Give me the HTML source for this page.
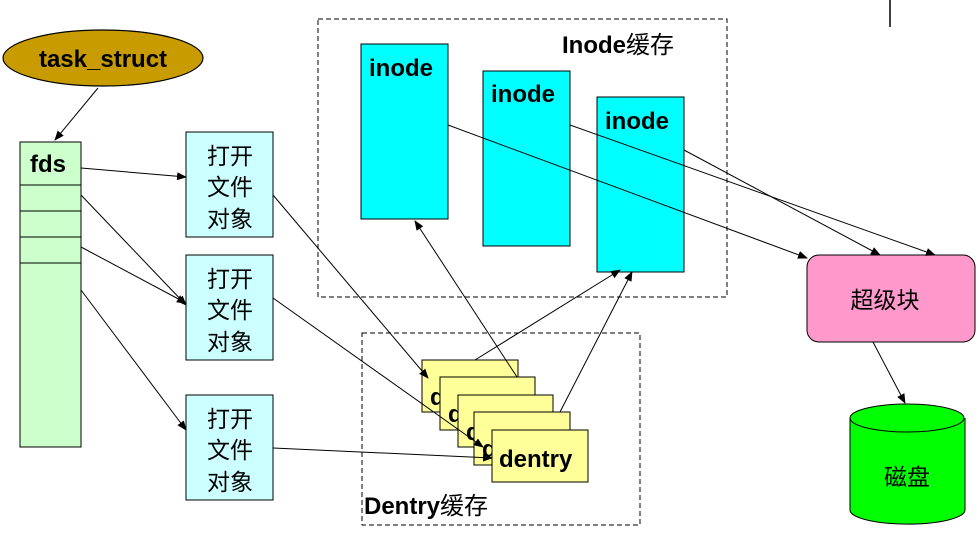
<!DOCTYPE html>
<html><head><meta charset="utf-8"><style>
html,body{margin:0;padding:0;background:#fff;width:979px;height:553px;overflow:hidden}
text{font-family:"Liberation Sans","Noto Sans CJK SC",sans-serif}
.b{font-weight:bold;font-size:24px}
.c{font-size:23px}
</style></head><body>
<svg width="979" height="553" viewBox="0 0 979 553" xmlns="http://www.w3.org/2000/svg">
<defs><marker id="a" markerWidth="10" markerHeight="8" refX="9" refY="4" orient="auto" markerUnits="userSpaceOnUse"><path d="M0,0 L10,4 L0,8 z" fill="#000"/></marker></defs>
<line x1="890" y1="0" x2="890" y2="27" stroke="#000" stroke-width="1.5"/>
<ellipse cx="103" cy="58" rx="100" ry="28" fill="#C89B00" stroke="#000" stroke-width="1.2"/>
<text x="103" y="67" text-anchor="middle" class="b">task_struct</text>
<line x1="98" y1="88" x2="55" y2="140" stroke="#000" marker-end="url(#a)"/>
<rect x="20" y="142" width="61" height="305" fill="#CCFFCC" stroke="#000"/>
<line x1="20" y1="185" x2="81" y2="185" stroke="#000"/>
<line x1="20" y1="211" x2="81" y2="211" stroke="#000"/>
<line x1="20" y1="237" x2="81" y2="237" stroke="#000"/>
<line x1="20" y1="263" x2="81" y2="263" stroke="#000"/>
<text x="30" y="172" class="b">fds</text>
<g fill="#CCFFFF" stroke="#000">
<rect x="186" y="132" width="87" height="105"/><rect x="186" y="255" width="87" height="105"/><rect x="186" y="395" width="87" height="105"/></g>
<g class="c" text-anchor="middle">
<text x="230" y="164">打开</text><text x="230" y="195">文件</text><text x="230" y="227">对象</text>
<text x="230" y="287">打开</text><text x="230" y="318">文件</text><text x="230" y="350">对象</text>
<text x="230" y="427">打开</text><text x="230" y="458">文件</text><text x="230" y="490">对象</text></g>
<rect x="318" y="19" width="409" height="278" fill="none" stroke="#000" stroke-dasharray="5,3"/>
<text x="562" y="53" class="b">Inode<tspan font-weight="normal">缓存</tspan></text>
<g fill="#00FFFF" stroke="#000">
<rect x="361" y="44" width="87" height="175"/><rect x="483" y="71" width="87" height="175"/><rect x="597" y="97" width="87" height="175"/></g>
<text x="369" y="76" class="b">inode</text><text x="491" y="102" class="b">inode</text><text x="605" y="129" class="b">inode</text>
<rect x="362" y="333" width="278" height="192" fill="none" stroke="#000" stroke-dasharray="5,3"/>
<text x="364" y="514" class="b">Dentry<tspan font-weight="normal">缓存</tspan></text>
<rect x="422" y="360" width="96" height="52" fill="#FFFF99" stroke="#000"/><text x="430" y="405" class="b">d</text>
<rect x="440" y="377" width="95" height="53" fill="#FFFF99" stroke="#000"/><text x="448" y="422" class="b">d</text>
<rect x="458" y="395" width="95" height="52" fill="#FFFF99" stroke="#000"/><text x="466" y="440" class="b">d</text>
<rect x="474" y="412" width="96" height="53" fill="#FFFF99" stroke="#000"/><text x="482" y="457" class="b">d</text>
<rect x="492" y="430" width="96" height="52" fill="#FFFF99" stroke="#000"/>
<text x="499" y="467" class="b">dentry</text>
<rect x="807" y="255" width="168" height="87" rx="12" fill="#FF99CC" stroke="#000"/>
<text x="885" y="308" text-anchor="middle" class="c">超级块</text>
<path d="M850,418 L850,510 A57,14 0 0 0 965,510 L965,418" fill="#00FF00" stroke="#000"/>
<ellipse cx="907" cy="418" rx="57" ry="14" fill="#00FF00" stroke="#000"/>
<text x="907" y="485" text-anchor="middle" class="c">磁盘</text>
<g stroke="#000" fill="none" marker-end="url(#a)">
<line x1="81" y1="168" x2="186" y2="177"/>
<line x1="81" y1="195" x2="186" y2="305"/>
<line x1="81" y1="247" x2="186" y2="303"/>
<line x1="81" y1="290" x2="186" y2="430"/>
<line x1="273" y1="195" x2="428" y2="378"/>
<line x1="273" y1="298" x2="483" y2="447"/>
<line x1="273" y1="448" x2="492" y2="458"/>
<line x1="448" y1="125" x2="807" y2="258"/>
<line x1="570" y1="125" x2="935" y2="255"/>
<line x1="684" y1="150" x2="880" y2="255"/>
<line x1="475" y1="360" x2="620" y2="270"/>
<line x1="517" y1="377" x2="415" y2="221"/>
<line x1="560" y1="412" x2="632" y2="272"/>
<line x1="873" y1="342" x2="905" y2="403"/>
</g>
</svg>
</body></html>
